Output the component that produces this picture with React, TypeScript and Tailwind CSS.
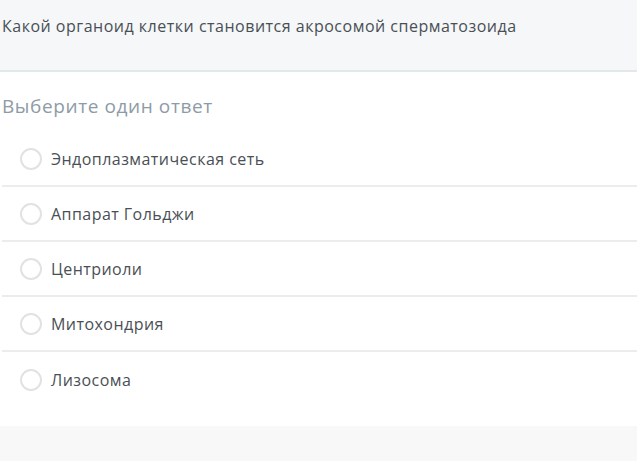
const options = [
  "Эндоплазматическая сеть",
  "Аппарат Гольджи",
  "Центриоли",
  "Митохондрия",
  "Лизосома",
];

export default function App() {
  return (
    <div
      className="w-[639px] h-[463px] bg-white text-[#4a4f55]"
      style={{ fontFamily: '"Open Sans", "Noto Sans", sans-serif' }}
    >
      <div className="w-[637px]">
        {/* question */}
        <div className="h-[72px] bg-[#f5f7f9] border-b-2 border-[#e3e8eb] pl-[2px] pt-[15px]">
          <p className="text-[16px] leading-[22px] tracking-[0.5px]">
            Какой органоид клетки становится акросомой сперматозоида
          </p>
        </div>

        {/* answers */}
        <div className="pt-[21px] pb-[19px]">
          <h2 className="pl-[2px] text-[19px] leading-[26px] tracking-[0.6px] text-[#8d9ba6]">
            Выберите один ответ
          </h2>
          <ul className="mt-[13px]">
            {options.map((opt, i) => (
              <li
                key={opt}
                className={`ml-[2px] h-[55px] flex items-center gap-[9px] pl-[18px] ${
                  i < options.length - 1 ? "border-b-2 border-[#ececec]" : ""
                }`}
              >
                <span className="w-[22px] h-[22px] rounded-full border-2 border-[#e2e2e2] bg-white shrink-0" />
                <span className="text-[16px] leading-[22px] tracking-[0.45px]">{opt}</span>
              </li>
            ))}
          </ul>
        </div>

        {/* footer */}
        <div className="h-[35px] bg-[#f8f8f8]" />
      </div>
    </div>
  );
}
